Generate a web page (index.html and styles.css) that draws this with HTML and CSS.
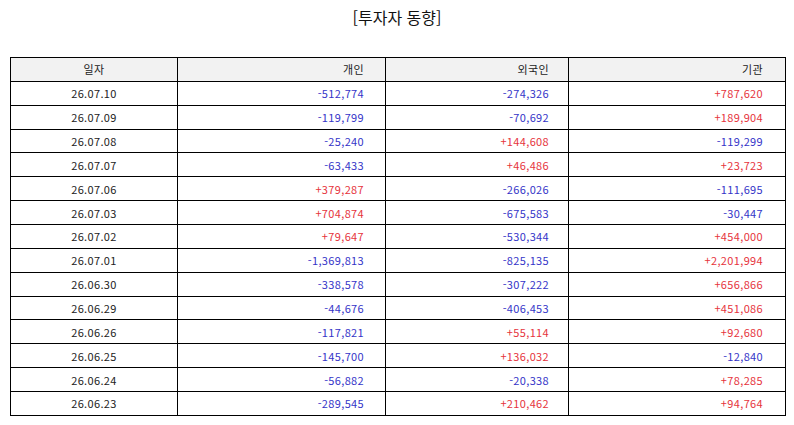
FILE: index.html
```html
<!DOCTYPE html>
<html lang="ko">
<head>
<meta charset="utf-8">
<title>투자자 동향</title>
<link rel="stylesheet" href="styles.css">
</head>
<body>
<h1 class="title">[투자자 동향]</h1>
<table class="grid">
<colgroup>
<col class="c-date"><col class="c-ind"><col class="c-for"><col class="c-ins">
</colgroup>
<thead>
<tr><th class="date">일자</th><th class="num pi">개인</th><th class="num pf">외국인</th><th class="num ps">기관</th></tr>
</thead>
<tbody>
<tr><td class="date">26.07.10</td><td class="num pi neg">-512,774</td><td class="num pf neg">-274,326</td><td class="num ps pos">+787,620</td></tr>
<tr><td class="date">26.07.09</td><td class="num pi neg">-119,799</td><td class="num pf neg">-70,692</td><td class="num ps pos">+189,904</td></tr>
<tr><td class="date">26.07.08</td><td class="num pi neg">-25,240</td><td class="num pf pos">+144,608</td><td class="num ps neg">-119,299</td></tr>
<tr><td class="date">26.07.07</td><td class="num pi neg">-63,433</td><td class="num pf pos">+46,486</td><td class="num ps pos">+23,723</td></tr>
<tr><td class="date">26.07.06</td><td class="num pi pos">+379,287</td><td class="num pf neg">-266,026</td><td class="num ps neg">-111,695</td></tr>
<tr><td class="date">26.07.03</td><td class="num pi pos">+704,874</td><td class="num pf neg">-675,583</td><td class="num ps neg">-30,447</td></tr>
<tr><td class="date">26.07.02</td><td class="num pi pos">+79,647</td><td class="num pf neg">-530,344</td><td class="num ps pos">+454,000</td></tr>
<tr><td class="date">26.07.01</td><td class="num pi neg">-1,369,813</td><td class="num pf neg">-825,135</td><td class="num ps pos">+2,201,994</td></tr>
<tr><td class="date">26.06.30</td><td class="num pi neg">-338,578</td><td class="num pf neg">-307,222</td><td class="num ps pos">+656,866</td></tr>
<tr><td class="date">26.06.29</td><td class="num pi neg">-44,676</td><td class="num pf neg">-406,453</td><td class="num ps pos">+451,086</td></tr>
<tr><td class="date">26.06.26</td><td class="num pi neg">-117,821</td><td class="num pf pos">+55,114</td><td class="num ps pos">+92,680</td></tr>
<tr><td class="date">26.06.25</td><td class="num pi neg">-145,700</td><td class="num pf pos">+136,032</td><td class="num ps neg">-12,840</td></tr>
<tr><td class="date">26.06.24</td><td class="num pi neg">-56,882</td><td class="num pf neg">-20,338</td><td class="num ps pos">+78,285</td></tr>
<tr><td class="date">26.06.23</td><td class="num pi neg">-289,545</td><td class="num pf pos">+210,462</td><td class="num ps pos">+94,764</td></tr>
</tbody>
</table>
</body>
</html>
```
FILE: styles.css
```css
html, body {
  margin: 0;
  padding: 0;
  background: #ffffff;
}
body {
  font-family: "Noto Sans CJK KR", "Noto Sans", sans-serif;
  color: #222222;
}
.title {
  margin: 0;
  height: 57px;
  padding-top: 5px;
  box-sizing: border-box;
  font-size: 16px;
  font-weight: normal;
  line-height: 24px;
  text-align: center;
  color: #111111;
}
.grid {
  margin-left: 10px;
  width: 775px;
  border-collapse: collapse;
  table-layout: fixed;
  font-size: 11px;
  letter-spacing: 0.35px;
}
.c-date { width: 167px; }
.c-ind { width: 208px; }
.c-for { width: 183px; }
.c-ins { width: 217px; }
.grid th, .grid td {
  border: 1px solid #000000;
  height: 23.87px;
  padding: 0;
  box-sizing: border-box;
  font-weight: normal;
  line-height: 14px;
  vertical-align: middle;
  white-space: nowrap;
}
.grid thead th {
  background: #f2f2f2;
}
.date { text-align: center; }
.num { text-align: right; }
.pi { padding-right: 21px !important; }
.pf { padding-right: 19px !important; }
.ps { padding-right: 22px !important; }
.neg { color: #3434c8; }
.pos { color: #e6333c; }
```
